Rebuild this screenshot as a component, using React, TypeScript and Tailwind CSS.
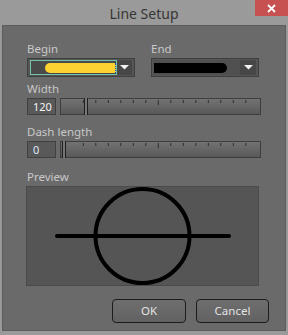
import React from "react";

const font = { fontFamily: '"Noto Sans", "Open Sans", sans-serif' };

function Ticks() {
  const ticks = [];
  for (let k = 0; k < 14; k++) {
    const x = 22.3 + 12.5 * k;
    ticks.push(
      <line key={k} x1={x} x2={x} y1={1} y2={k === 6 ? 6 : 4} stroke="#2e2e2e" strokeWidth={1} />
    );
  }
  return (
    <svg className="absolute left-0 top-0" width="201" height="17">
      {ticks}
    </svg>
  );
}

function Slider({ thumb, value, valueColor }: { thumb: number; value: string; valueColor: string }) {
  return (
    <div className="flex h-[17px] gap-[4px]">
      <div className="flex h-full w-[29px] items-center border border-[#404040] bg-[#595959] pl-[5px] text-[11px] leading-none" style={{ color: valueColor }}>
        {value}
      </div>
      <div className="relative h-full w-[201px] border border-[#3e3e3e] bg-gradient-to-b from-[#727272] via-[#666] to-[#585858]">
        <Ticks />
        <div className="absolute top-[-1px] h-[17px] w-[4px] border-x border-[#1e1e1e] bg-[#777]" style={{ left: thumb }} />
      </div>
    </div>
  );
}

function Caret() {
  return (
    <svg width="9" height="5" viewBox="0 0 9 5">
      <path d="M0 0 H9 L4.5 4.5 Z" fill="#f2f2f2" />
    </svg>
  );
}

export default function App() {
  return (
    <div className="flex h-[335px] w-[288px] flex-col bg-[#9a9a9a]" style={font}>
      <div className="relative flex h-[25px] shrink-0 items-center justify-center">
        <span className="pt-[3px] text-[14px] leading-none text-[#363636]">Line Setup</span>
        <div className="absolute right-0 top-0 flex h-[16px] w-[33px] items-center justify-center bg-[#c75050]">
          <svg width="9" height="9" viewBox="0 0 9 9">
            <path d="M1 1 L8 8 M8 1 L1 8" stroke="#fff" strokeWidth="1.8" />
          </svg>
        </div>
      </div>
      <div className="mx-[2px] mb-[4px] flex flex-1 flex-col border border-[#5c5c5c] bg-[#6a6a6a] pl-[24px] pr-[16px] pt-[15px] text-[11.5px] leading-[16px] text-[#c8c8c8]">
        <div className="flex gap-[16px]">
          <div className="flex w-[108px] flex-col">
            <span>Begin</span>
            <div className="mt-[1px] flex h-[19px] items-center border border-[#3f3f3f] bg-[#555] px-[2px]">
              <div className="flex h-[15px] w-[87px] items-center border border-[#6ec3a8] bg-[#4a4a4a]">
                <div className="ml-[14px] h-[10px] w-[71px] rounded-l-full border-r border-dotted border-[#2040c0] bg-[#fcd232]" />
              </div>
              <div className="flex h-[15px] w-[16px] items-center justify-center bg-[#474747]">
                <Caret />
              </div>
            </div>
          </div>
          <div className="flex w-[108px] flex-col">
            <span>End</span>
            <div className="mt-[1px] flex h-[19px] items-center border border-[#3f3f3f] bg-[#555] px-[2px]">
              <div className="flex h-[15px] w-[88px] items-center bg-[#505050]">
                <div className="h-[10px] w-[73px] rounded-r-full bg-black" />
              </div>
              <div className="flex h-[15px] w-[16px] items-center justify-center bg-[#474747]">
                <Caret />
              </div>
            </div>
          </div>
        </div>

        <span className="mt-[4px]">Width</span>
        <div className="mt-[1px]">
          <Slider thumb={23} value="120" valueColor="#f4f4f4" />
        </div>

        <span className="mt-[9px]">Dash length</span>
        <div className="mt-[1px]">
          <Slider thumb={1} value="0" valueColor="#dde6ff" />
        </div>

        <span className="mt-[11px]">Preview</span>
        <div className="ml-[-1px] mt-[1px] h-[100px] w-[233px] border border-[#4a4a4a] bg-[#555555]">
          <svg width="231" height="98" viewBox="0 0 231 98">
            <circle cx="115.5" cy="49" r="47" fill="none" stroke="#000" strokeWidth="4" />
            <line x1="30" y1="49" x2="202" y2="49" stroke="#000" strokeWidth="4" strokeLinecap="round" />
          </svg>
        </div>

        <div className="mt-[13px] flex justify-end gap-[10px]">
          <button className="h-[24px] w-[74px] rounded-[4px] border border-[#1c1c1c] bg-gradient-to-b from-[#6e6e6e] to-[#626262] text-[11.5px] text-[#e2e2e2]">
            OK
          </button>
          <button className="h-[24px] w-[73px] rounded-[4px] border border-[#1c1c1c] bg-gradient-to-b from-[#6e6e6e] to-[#626262] text-[11.5px] text-[#e2e2e2]">
            Cancel
          </button>
        </div>
      </div>
    </div>
  );
}
